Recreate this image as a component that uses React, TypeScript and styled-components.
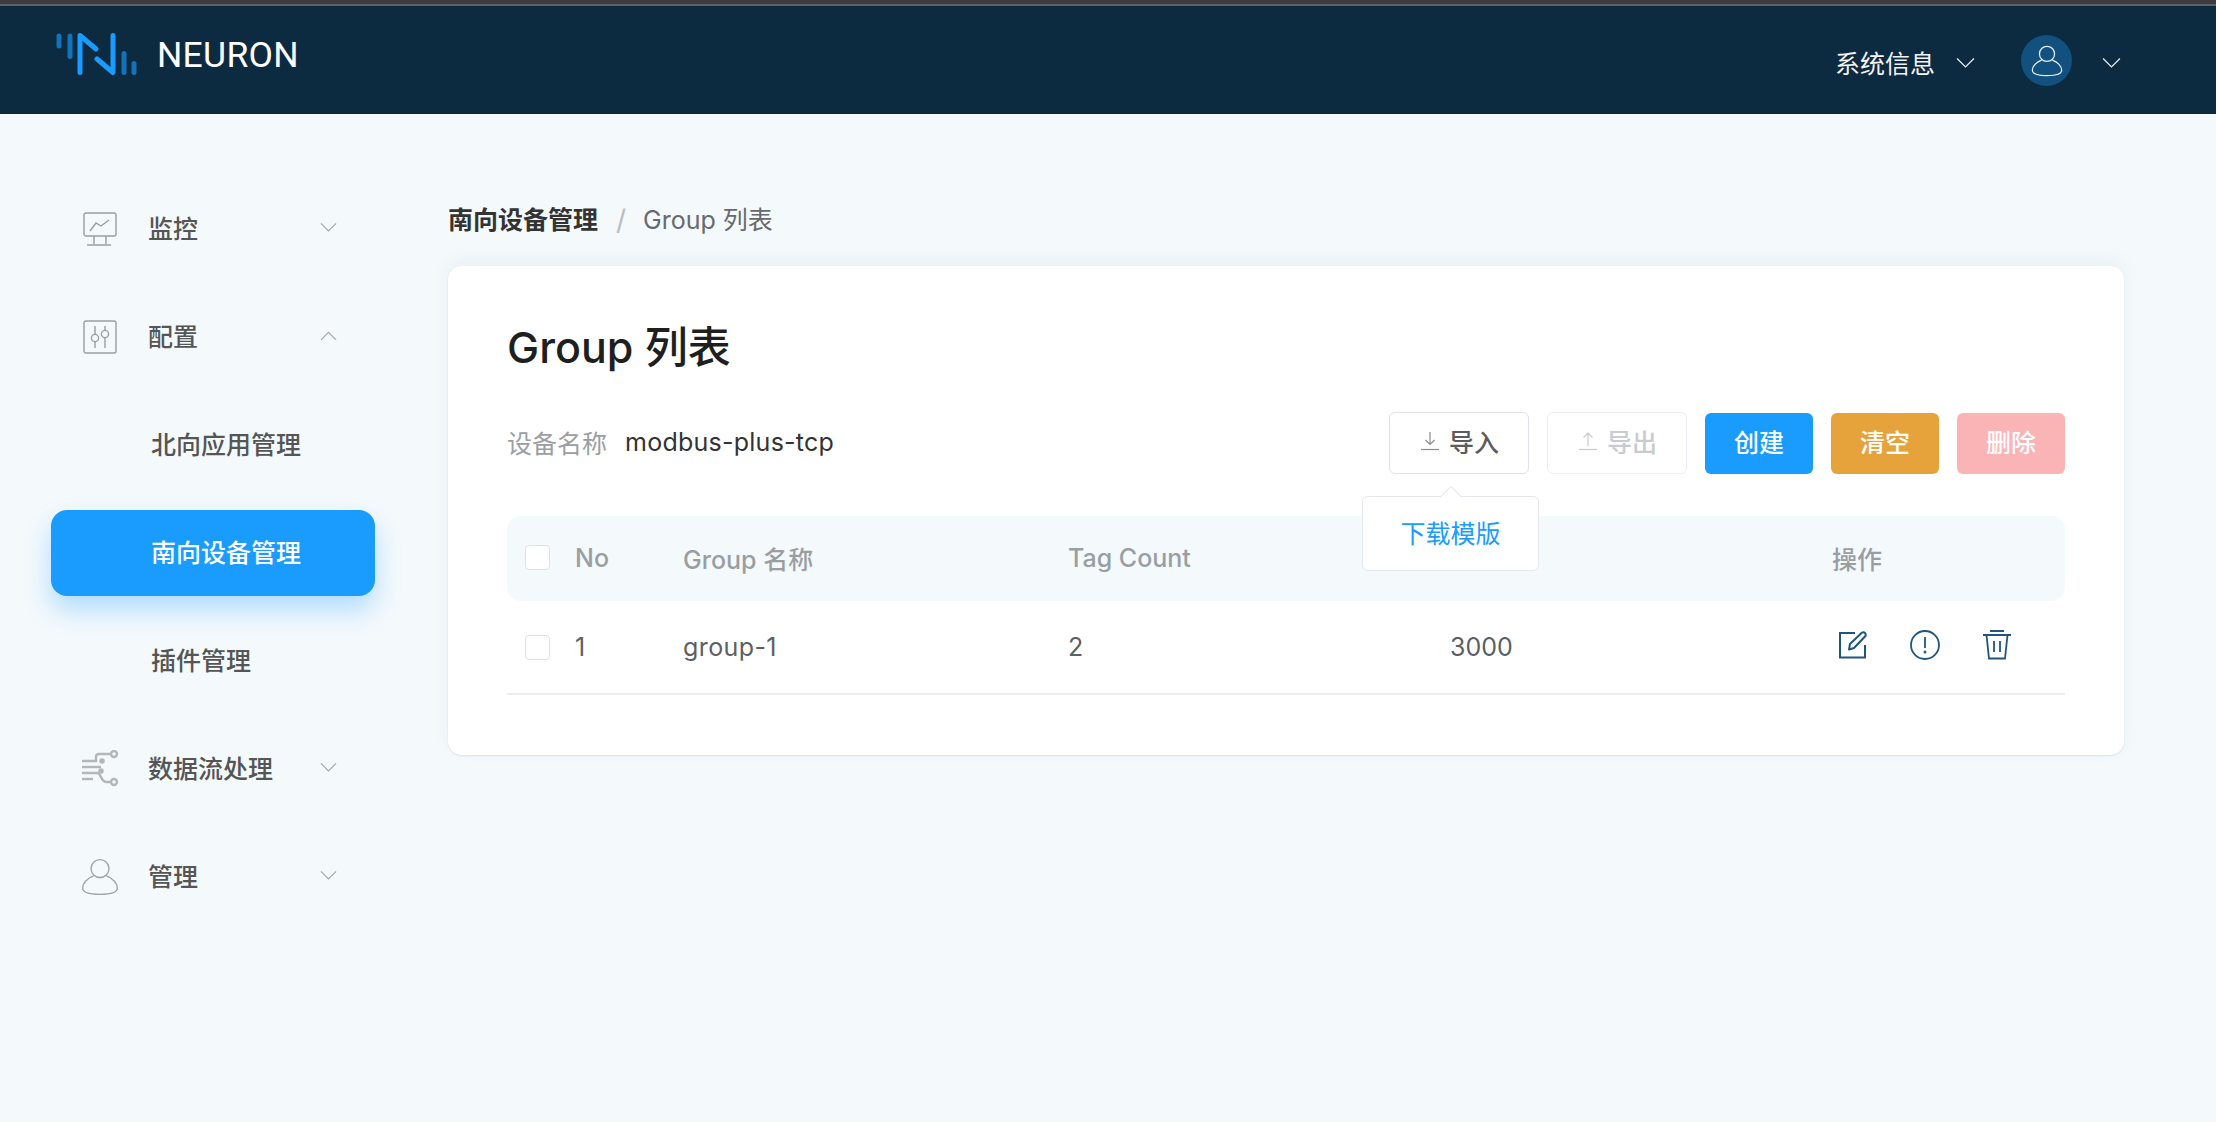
import React from 'react';
import styled, { createGlobalStyle } from 'styled-components';

const GlobalStyle = createGlobalStyle`
  html, body {
    margin: 0;
    padding: 0;
    background: #f4f9fc;
    font-family: Inter, 'Noto Sans CJK SC', sans-serif;
    overflow: hidden;
  }
`;

const Page = styled.div`
  width: 2216px;
  height: 1122px;
  display: flex;
  flex-direction: column;
  background: #f4f9fc;
`;

const Header = styled.header`
  height: 108px;
  flex: none;
  display: flex;
  align-items: center;
  background: #0c2a40;
  border-top: 4px solid #3c3c3e;
  box-shadow: inset 0 2px 0 #5f6163;
  padding: 2px 95px 0 55px;
  color: #fff;
`;

const Brand = styled.div`
  display: flex;
  align-items: center;
  gap: 20px;
  margin-top: -13px;
`;

const BrandName = styled.span`
  font-family: Roboto, sans-serif;
  font-size: 35.5px;
  letter-spacing: 0.3px;
  padding-top: 2px;
`;

const HeaderRight = styled.div`
  margin-left: auto;
  display: flex;
  align-items: center;
  margin-top: 3px;
`;

const SystemInfo = styled.span`
  font-size: 25px;
  color: #f2f4f6;
  margin-right: 21px;
`;

const HeaderChevron = styled.span`
  display: flex;
  margin-top: 3px;
`;

const Avatar = styled.div`
  width: 51px;
  height: 51px;
  border-radius: 50%;
  background: #11507f;
  display: grid;
  place-items: center;
  margin: -2px 30px 0 46px;
`;

const Body = styled.div`
  flex: 1;
  display: flex;
  min-height: 0;
`;

const Sidebar = styled.nav`
  width: 448px;
  flex: none;
  box-sizing: border-box;
  padding: 72px 73px 0 51px;
  display: flex;
  flex-direction: column;
  gap: 22px;
`;

const MenuItem = styled.div<{ $active?: boolean }>`
  height: 86px;
  box-sizing: border-box;
  display: flex;
  align-items: center;
  border-radius: 16px;
  font-size: 25px;
  font-weight: 500;
  color: ${(p) => (p.$active ? '#fff' : '#555')};
  background: ${(p) => (p.$active ? '#1a9cff' : 'transparent')};
  box-shadow: ${(p) => (p.$active ? '0 14px 26px rgba(26, 156, 255, 0.3)' : 'none')};
  padding-left: ${(p) => (p.$active !== undefined ? '100px' : '28px')};
  padding-bottom: 5px;
`;

const MenuIcon = styled.span`
  width: 42px;
  height: 42px;
  margin: 4px 27px 0 0;
  display: grid;
  place-items: center;
  flex: none;
`;

const MenuChevron = styled.span`
  margin: 2px 38px 0 auto;
  display: flex;
`;

const Main = styled.main`
  flex: 1;
  min-width: 0;
  padding: 89px 92px 0 0;
`;

const Breadcrumb = styled.div`
  height: 34px;
  display: flex;
  align-items: center;
  font-size: 25px;
  line-height: 34px;
  color: #666a6e;
  margin-bottom: 29px;
`;

const CrumbRoot = styled.span`
  font-weight: 600;
  color: #333;
`;

const CrumbSep = styled.span`
  color: #b8bcc2;
  font-size: 28px;
  margin: 0 17px 0 18px;
`;

const Card = styled.section`
  height: 489px;
  box-sizing: border-box;
  background: #fff;
  border-radius: 14px;
  padding: 52px 59px 0;
  box-shadow: 0 -6px 18px rgba(30, 50, 70, 0.05), 0 1px 2px rgba(30, 50, 70, 0.1);
`;

const Title = styled.h1`
  margin: 0;
  font-size: 43px;
  line-height: 58px;
  font-weight: 500;
  color: #1f1f1f;
`;

const Toolbar = styled.div`
  display: flex;
  align-items: center;
  height: 62px;
  margin-top: 36px;
`;

const FieldLabel = styled.span`
  font-size: 25px;
  color: #9a9ea3;
  margin: -3px 18px 0 0;
`;

const FieldValue = styled.span`
  font-size: 25px;
  letter-spacing: 0.25px;
  color: #333;
  margin-top: -3px;
`;

const Actions = styled.div`
  margin-left: auto;
  display: flex;
  align-items: center;
  gap: 18px;
`;

const PopWrap = styled.div`
  position: relative;
`;

const OutlineButton = styled.button<{ $disabled?: boolean }>`
  width: 140px;
  height: 62px;
  box-sizing: border-box;
  display: flex;
  align-items: center;
  justify-content: center;
  gap: 10px;
  background: #fff;
  border: 1.5px solid ${(p) => (p.$disabled ? '#ecedf2' : '#dfe0e8')};
  border-radius: 6px;
  font: inherit;
  font-size: 25px;
  font-weight: 500;
  color: ${(p) => (p.$disabled ? '#c8cbd1' : '#5a5c60')};
  padding: 0 0 5px 2px;
`;

const FillButton = styled.button<{ $color: string }>`
  width: 108px;
  height: 61px;
  border: none;
  border-radius: 6px;
  background: ${(p) => p.$color};
  color: #fff;
  font: inherit;
  font-size: 25px;
  font-weight: 500;
  padding: 0 0 5px;
`;

const Popover = styled.div`
  position: absolute;
  z-index: 2;
  top: 84px;
  left: -27px;
  width: 177px;
  height: 75px;
  box-sizing: border-box;
  display: grid;
  place-items: center;
  padding-bottom: 3px;
  background: #fff;
  border: 1.5px solid #e6e7ee;
  border-radius: 6px;
  font-size: 25px;
  color: #1a9cff;

  &::before {
    content: '';
    position: absolute;
    top: -8px;
    left: 80px;
    width: 15px;
    height: 15px;
    background: #fff;
    border-left: 1.5px solid #e6e7ee;
    border-top: 1.5px solid #e6e7ee;
    transform: rotate(45deg);
  }
`;

const columns = '68px 108px 385px 382px 382px 1fr';

const TableHead = styled.div`
  display: grid;
  grid-template-columns: ${columns};
  align-items: center;
  height: 85px;
  box-sizing: border-box;
  padding-bottom: 2px;
  margin-top: 42px;
  background: #f4f9fc;
  border-radius: 14px;
  font-size: 25px;
  font-weight: 500;
  color: #9a9ea3;
`;

const TableRow = styled.div`
  display: grid;
  grid-template-columns: ${columns};
  align-items: center;
  height: 94px;
  box-sizing: border-box;
  border-bottom: 2px solid #ebeff4;
  font-size: 25px;
  color: #5c5f63;
`;

const CheckCell = styled.div`
  padding-left: 18px;
`;

const Check = styled.span`
  display: block;
  width: 25px;
  height: 25px;
  box-sizing: border-box;
  background: #fff;
  border: 1.5px solid #dfe1e8;
  border-radius: 4px;
`;

const RowName = styled.span`
  letter-spacing: 0.4px;
`;

const RowActions = styled.div`
  display: flex;
  align-items: center;
  gap: 43px;
  margin: -5px 0 0 7px;
`;

const Chevron = ({ up, size = 19, color }: { up?: boolean; size?: number; color: string }) => (
  <svg width={size} height={size * 0.55} viewBox="0 0 19 10.5" fill="none" stroke={color} strokeWidth="1.3">
    <path d={up ? 'M1 10 L9.5 1.5 L18 10' : 'M1 .5 L9.5 9 L18 .5'} />
  </svg>
);

const Logo = () => (
  <svg width="82" height="44" viewBox="55 33 82 44" fill="none" strokeWidth="5" strokeLinecap="round">
    <g stroke="#1273b8">
      <path d="M59 37 V47" />
      <path d="M70 37 V57.5" />
      <path d="M124 54.5 V73.5" />
      <path d="M134 64.5 V73.5" />
    </g>
    <g stroke="#1a9cff" strokeLinejoin="round">
      <path d="M80 73.5 V36.5 L96 50" />
      <path d="M97 60 L113 73.5 V36.5" />
    </g>
  </svg>
);

const UserIcon = ({ color, size, width = 1.4 }: { color: string; size: number; width?: number }) => (
  <svg width={size} height={size} viewBox="0 0 36 36" fill="none" stroke={color} strokeWidth={width}>
    <circle cx="18" cy="10" r="8.5" />
    <path d="M12 17 C6 19 1.5 24 1.5 28.5 C1.5 33 7 34.5 18 34.5 C29 34.5 34.5 33 34.5 28.5 C34.5 24 30 19 24 17" />
  </svg>
);

const MonitorIcon = () => (
  <svg width="34" height="34" viewBox="0 0 34 34" fill="none" stroke="#9a9ea3" strokeWidth="1.4">
    <rect x="1" y="1" width="32" height="23" rx="2" />
    <path d="M7 19 L13 11 L18 14 L26 8" />
    <path d="M11 24 V32 M23 24 V32 M4 33 H28" />
  </svg>
);

const SlidersIcon = () => (
  <svg width="34" height="34" viewBox="0 0 34 34" fill="none" stroke="#9a9ea3" strokeWidth="1.4">
    <rect x="1" y="1" width="32" height="32" rx="2" />
    <path d="M12 6 V14 M12 21 V28 M22 6 V10 M22 17 V28" />
    <circle cx="12" cy="18" r="3.6" />
    <circle cx="22" cy="14" r="3.6" />
  </svg>
);

const FlowIcon = () => (
  <svg width="38" height="38" viewBox="0 0 38 38" fill="none" stroke="#b3b6bb" strokeWidth="2.4">
    <circle cx="33" cy="4" r="3" />
    <circle cx="33" cy="32" r="3" />
    <path d="M30 4 H18 Q15 4 15 7 V11 H1" />
    <path d="M1 17 H20" />
    <path d="M1 23 H16 Q18 23 20 27 Q22 32 26 32 H30" />
    <path d="M1 29 H12" />
    <circle cx="21" cy="11" r="1.6" fill="#b3b6bb" />
    <circle cx="20" cy="21" r="1.6" fill="#b3b6bb" />
  </svg>
);

const EditIcon = () => (
  <svg width="28" height="28" viewBox="0 0 28 28" fill="none" stroke="#1f5580" strokeWidth="2">
    <path d="M16 2 H1 V26.5 H26 V14" />
    <path d="M10 18.5 L11 13 L22.5 2 Q24.5 .5 26 2 Q27.5 4 26 5.5 L15 17 Z" strokeLinejoin="round" />
  </svg>
);

const AlertIcon = () => (
  <svg width="30" height="30" viewBox="0 0 30 30" fill="none" stroke="#1f5580" strokeWidth="1.8">
    <circle cx="15" cy="15" r="14" />
    <path d="M15 7 V18" />
    <circle cx="15" cy="22" r="0.6" fill="#1f5580" />
  </svg>
);

const TrashIcon = () => (
  <svg width="28" height="30" viewBox="0 0 28 30" fill="none" stroke="#1f5580" strokeWidth="1.8">
    <path d="M7 1 H21 M0 5 H28" />
    <path d="M3.5 5 L6 28.5 H22 L24.5 5" />
    <path d="M11 11 V22 M17 11 V22" />
  </svg>
);

const TrayArrow = ({ up, color }: { up?: boolean; color: string }) => (
  <svg width="18" height="20" viewBox="0 0 18 20" fill="none" stroke={color} strokeWidth="1.2">
    <path d="M0 18.5 H18" />
    {up ? <path d="M9 15 V2 M4.5 6.5 L9 2 L13.5 6.5" /> : <path d="M9 1 V13.5 M4.5 9 L9 13.5 L13.5 9" />}
  </svg>
);

const App: React.FC = () => (
  <>
    <GlobalStyle />
    <Page>
      <Header>
        <Brand>
          <Logo />
          <BrandName>NEURON</BrandName>
        </Brand>
        <HeaderRight>
          <SystemInfo>系统信息</SystemInfo>
          <HeaderChevron><Chevron color="#e8ecef" /></HeaderChevron>
          <Avatar>
            <UserIcon color="#e8eef3" size={32} />
          </Avatar>
          <HeaderChevron><Chevron color="#e8ecef" /></HeaderChevron>
        </HeaderRight>
      </Header>
      <Body>
        <Sidebar>
          <MenuItem>
            <MenuIcon><MonitorIcon /></MenuIcon>
            监控
            <MenuChevron><Chevron color="#a4a7ab" size={17} /></MenuChevron>
          </MenuItem>
          <MenuItem>
            <MenuIcon><SlidersIcon /></MenuIcon>
            配置
            <MenuChevron><Chevron up color="#a4a7ab" size={17} /></MenuChevron>
          </MenuItem>
          <MenuItem $active={false}>北向应用管理</MenuItem>
          <MenuItem $active>南向设备管理</MenuItem>
          <MenuItem $active={false}>插件管理</MenuItem>
          <MenuItem>
            <MenuIcon><FlowIcon /></MenuIcon>
            数据流处理
            <MenuChevron><Chevron color="#a4a7ab" size={17} /></MenuChevron>
          </MenuItem>
          <MenuItem>
            <MenuIcon><UserIcon color="#a0a3a7" size={38} width={1.3} /></MenuIcon>
            管理
            <MenuChevron><Chevron color="#a4a7ab" size={17} /></MenuChevron>
          </MenuItem>
        </Sidebar>
        <Main>
          <Breadcrumb>
            <CrumbRoot>南向设备管理</CrumbRoot>
            <CrumbSep>/</CrumbSep>
            Group 列表
          </Breadcrumb>
          <Card>
            <Title>Group 列表</Title>
            <Toolbar>
              <FieldLabel>设备名称</FieldLabel>
              <FieldValue>modbus-plus-tcp</FieldValue>
              <Actions>
                <PopWrap>
                  <OutlineButton>
                    <TrayArrow color="#8a8d91" />
                    导入
                  </OutlineButton>
                  <Popover>下载模版</Popover>
                </PopWrap>
                <OutlineButton $disabled>
                  <TrayArrow up color="#c8cbd1" />
                  导出
                </OutlineButton>
                <FillButton $color="#1a9cff">创建</FillButton>
                <FillButton $color="#e6a33c">清空</FillButton>
                <FillButton $color="#fbb4b6">删除</FillButton>
              </Actions>
            </Toolbar>
            <TableHead>
              <CheckCell><Check /></CheckCell>
              <span>No</span>
              <span>Group 名称</span>
              <span>Tag Count</span>
              <span />
              <span>操作</span>
            </TableHead>
            <TableRow>
              <CheckCell><Check /></CheckCell>
              <span>1</span>
              <RowName>group-1</RowName>
              <span>2</span>
              <span>3000</span>
              <RowActions>
                <EditIcon />
                <AlertIcon />
                <TrashIcon />
              </RowActions>
            </TableRow>
          </Card>
        </Main>
      </Body>
    </Page>
  </>
);

export default App;
